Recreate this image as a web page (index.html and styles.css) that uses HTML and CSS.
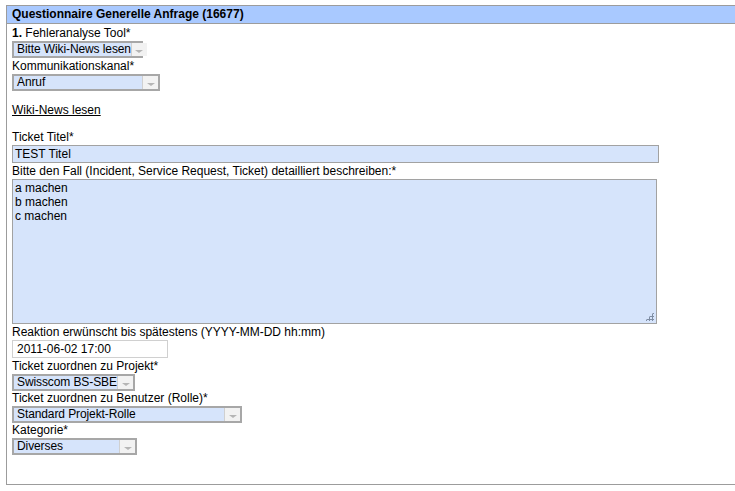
FILE: index.html
```html
<!DOCTYPE html>
<html>
<head>
<meta charset="utf-8">
<link rel="stylesheet" href="styles.css">
</head>
<body>
<div class="panel">
  <div class="panel-head">Questionnaire Generelle Anfrage (16677)</div>
  <div class="panel-body">
    <div class="label"><b>1.</b> Fehleranalyse Tool*</div>
    <div class="select w-131"><span class="val">Bitte Wiki-News lesen</span><span class="btn"><span class="arrow"></span></span></div>
    <div class="label">Kommunikationskanal*</div>
    <div class="select w-148"><span class="val">Anruf</span><span class="btn"><span class="arrow"></span></span></div>
    <div class="spacer"></div>
    <div class="label"><a class="link" href="#">Wiki-News lesen</a></div>
    <div class="spacer"></div>
    <div class="label">Ticket Titel*</div>
    <div class="input wide">TEST Titel</div>
    <div class="label">Bitte den Fall (Incident, Service Request, Ticket) detailliert beschreiben:*</div>
    <div class="textarea">a machen<br>b machen<br>c machen<span class="grip"></span></div>
    <div class="label">Reaktion erwünscht bis spätestens (YYYY-MM-DD hh:mm)</div>
    <div class="input date">2011-06-02 17:00</div>
    <div class="label">Ticket zuordnen zu Projekt*</div>
    <div class="select w-123"><span class="val">Swisscom BS-SBE</span><span class="btn"><span class="arrow"></span></span></div>
    <div class="label tight">Ticket zuordnen zu Benutzer (Rolle)*</div>
    <div class="select w-230"><span class="val">Standard Projekt-Rolle</span><span class="btn"><span class="arrow"></span></span></div>
    <div class="label tight">Kategorie*</div>
    <div class="select w-125"><span class="val">Diverses</span><span class="btn"><span class="arrow"></span></span></div>
  </div>
</div>
</body>
</html>
```
FILE: styles.css
```css
html, body { margin: 0; padding: 0; background: #fff; }
body {
  font-family: "Liberation Sans", Arial, sans-serif;
  font-size: 12px;
  color: #000;
  padding: 5px 0 0 6px;
}
.panel {
  width: 740px;
  height: 480px;
  box-sizing: border-box;
  border: 1px solid #9c9c9c;
  border-right: none;
}
.panel-head {
  background: #a9c9ff;
  font-weight: bold;
  height: 17px;
  line-height: 17px;
  padding-left: 5px;
  border-bottom: 1px solid #9c9c9c;
}
.panel-body {
  padding: 1px 0 0 5px;
}
.label {
  height: 16px;
  line-height: 16px;
}
.label.tight { height: 15px; line-height: 15px; }
.spacer { height: 11px; }
.link { color: #000; text-decoration: underline; }
.select {
  display: flex;
  height: 17px;
  box-sizing: border-box;
  border: 2px solid #a7a7a7;
  background: #d6e4fb;
}
.select .val {
  flex: 1;
  line-height: 13px;
  padding-left: 3px;
  white-space: nowrap;
  letter-spacing: -0.1px;
}
.select .btn {
  flex: none;
  width: 15px;
  background: #f2f2f2;
  border-left: 1px solid #d0d0d0;
  display: flex;
  align-items: center;
  justify-content: center;
}
.select .arrow {
  width: 0; height: 0;
  border-left: 4px solid transparent;
  border-right: 4px solid transparent;
  border-top: 3px solid #b5b5b5;
  margin-top: 3px;
}
.w-131 { width: 131px; }
.w-148 { width: 148px; }
.w-123 { width: 123px; }
.w-230 { width: 230px; }
.w-125 { width: 125px; }
.input {
  box-sizing: border-box;
  height: 18px;
  line-height: 16px;
  padding-left: 2px;
  border: 1px solid #a2a2a2;
  background: #d6e4fb;
}
.wide { width: 647px; }
.date { width: 156px; background: #fff; border-color: #d0d0d0; padding-left: 4px; }
.textarea {
  position: relative;
  box-sizing: border-box;
  width: 645px;
  height: 145px;
  border: 1px solid #a2a2a2;
  background: #d6e4fb;
  padding: 1px 2px 0;
  line-height: 14px;
}
.grip {
  position: absolute;
  right: 2px; bottom: 2px;
  width: 9px; height: 9px;
  background:
    radial-gradient(circle, #7f8da3 1px, transparent 1.2px) 0 0 / 3px 3px;
  clip-path: polygon(100% 0, 100% 100%, 0 100%);
}
```
